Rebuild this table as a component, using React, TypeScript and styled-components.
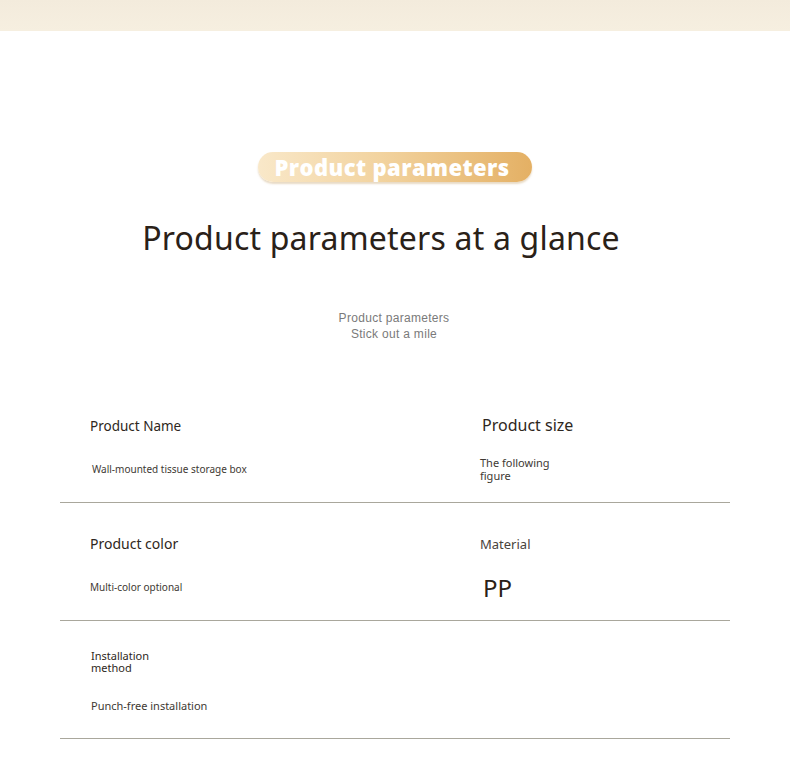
import React from 'react'
import styled, { createGlobalStyle } from 'styled-components'

const GlobalStyle = createGlobalStyle`
    html, body {
        margin: 0;
        padding: 0;
        background: #ffffff;
    }
    body {
        font-family: 'Noto Sans', 'Liberation Sans', sans-serif;
    }
`

interface Entry {
    label: string
    value: string
    labelSize: number
    valueSize: number
    labelIndent?: number
    valueIndent?: number
    labelWidth?: number
    valueWidth?: number
    labelColor?: string
}

const rows: Entry[][] = [
    [
        { label: 'Product Name', value: 'Wall-mounted tissue storage box', labelSize: 13.5, valueSize: 10, valueIndent: 2 },
        { label: 'Product size', value: 'The following figure', labelSize: 16, valueSize: 11, labelIndent: 2, valueWidth: 80 },
    ],
    [
        { label: 'Product color', value: 'Multi-color optional', labelSize: 14, valueSize: 10 },
        { label: 'Material', value: 'PP', labelSize: 13, valueSize: 24, valueIndent: 3, labelColor: '#4a433c' },
    ],
    [
        { label: 'Installation method', value: 'Punch-free installation', labelSize: 11, valueSize: 11, labelIndent: 1, valueIndent: 1, labelWidth: 70 },
    ],
]

export default function App() {
    return (
        <>
            <GlobalStyle />
            <Page>
                <TopBar />
                <Header>
                    <Pill>Product parameters</Pill>
                    <Title>Product parameters at a glance</Title>
                    <Subtitle>
                        Product parameters
                        <br />
                        Stick out a mile
                    </Subtitle>
                </Header>
                <Table>
                    {rows.map((row, i) => (
                        <Row key={i}>
                            {row.map((e) => (
                                <Cell key={e.label}>
                                    <Label
                                        $size={e.labelSize}
                                        $indent={e.labelIndent ?? 0}
                                        $width={e.labelWidth}
                                        $color={e.labelColor}
                                    >
                                        <span>{e.label}</span>
                                    </Label>
                                    <Value
                                        $size={e.valueSize}
                                        $indent={e.valueIndent ?? 0}
                                        $width={e.valueWidth}
                                    >
                                        <span>{e.value}</span>
                                    </Value>
                                </Cell>
                            ))}
                        </Row>
                    ))}
                </Table>
            </Page>
        </>
    )
}

const Page = styled.div`
    width: 790px;
    min-height: 775px;
    background: #ffffff;
    overflow: hidden;
`

const TopBar = styled.div`
    height: 31px;
    background: linear-gradient(180deg, #f3ebdc 0%, #f6efe0 100%);
`

const Header = styled.header`
    display: flex;
    flex-direction: column;
    align-items: center;
    padding-top: 121px;
`

const Pill = styled.div`
    width: 274px;
    height: 30px;
    box-sizing: border-box;
    border-radius: 15px;
    background: linear-gradient(90deg, #f9e8c9 0%, #f2d39f 45%, #e4b064 100%);
    box-shadow: 0 2px 2px rgba(190, 150, 90, 0.35);
    display: flex;
    align-items: center;
    justify-content: center;
    padding-right: 6px;
    color: #ffffff;
    font-family: 'Open Sans', sans-serif;
    font-weight: 800;
    font-size: 22px;
    letter-spacing: 0.4px;
`

const Title = styled.h1`
    margin: 32px 0 0;
    padding-right: 28px;
    font-family: 'Noto Sans', sans-serif;
    font-weight: 400;
    font-size: 32px;
    line-height: 48px;
    color: #2a2118;
    letter-spacing: 0.2px;
`

const Subtitle = styled.p`
    margin: 48px 0 0;
    padding-right: 2px;
    font-family: 'Liberation Sans', sans-serif;
    font-size: 12px;
    line-height: 16px;
    color: #7a7a7a;
    text-align: center;
    letter-spacing: 0.3px;
`

const Table = styled.div`
    margin: 43px 60px 0;
    width: 670px;
`

const Row = styled.div`
    display: grid;
    grid-template-columns: 390px 1fr;
    height: 118px;
    box-sizing: border-box;
    border-bottom: 1px solid #a9a79c;
`

const Cell = styled.div`
    display: flex;
    flex-direction: column;
    padding: 27px 0 0 30px;
`

const Label = styled.div<{ $size: number; $indent: number; $width?: number; $color?: string }>`
    height: 28px;
    display: flex;
    align-items: center;
    padding-left: ${(p) => p.$indent}px;
    font-size: ${(p) => p.$size}px;
    line-height: 1.1;
    color: ${(p) => p.$color ?? '#2e2721'};
    span {
        max-width: ${(p) => (p.$width ? `${p.$width}px` : 'none')};
    }
`

const Value = styled.div<{ $size: number; $indent: number; $width?: number }>`
    margin-top: 16px;
    height: 28px;
    display: flex;
    align-items: center;
    padding-left: ${(p) => p.$indent}px;
    font-size: ${(p) => p.$size}px;
    line-height: 1.15;
    color: ${(p) => (p.$size > 20 ? '#2a2118' : '#3e3933')};
    span {
        max-width: ${(p) => (p.$width ? `${p.$width}px` : 'none')};
    }
`
